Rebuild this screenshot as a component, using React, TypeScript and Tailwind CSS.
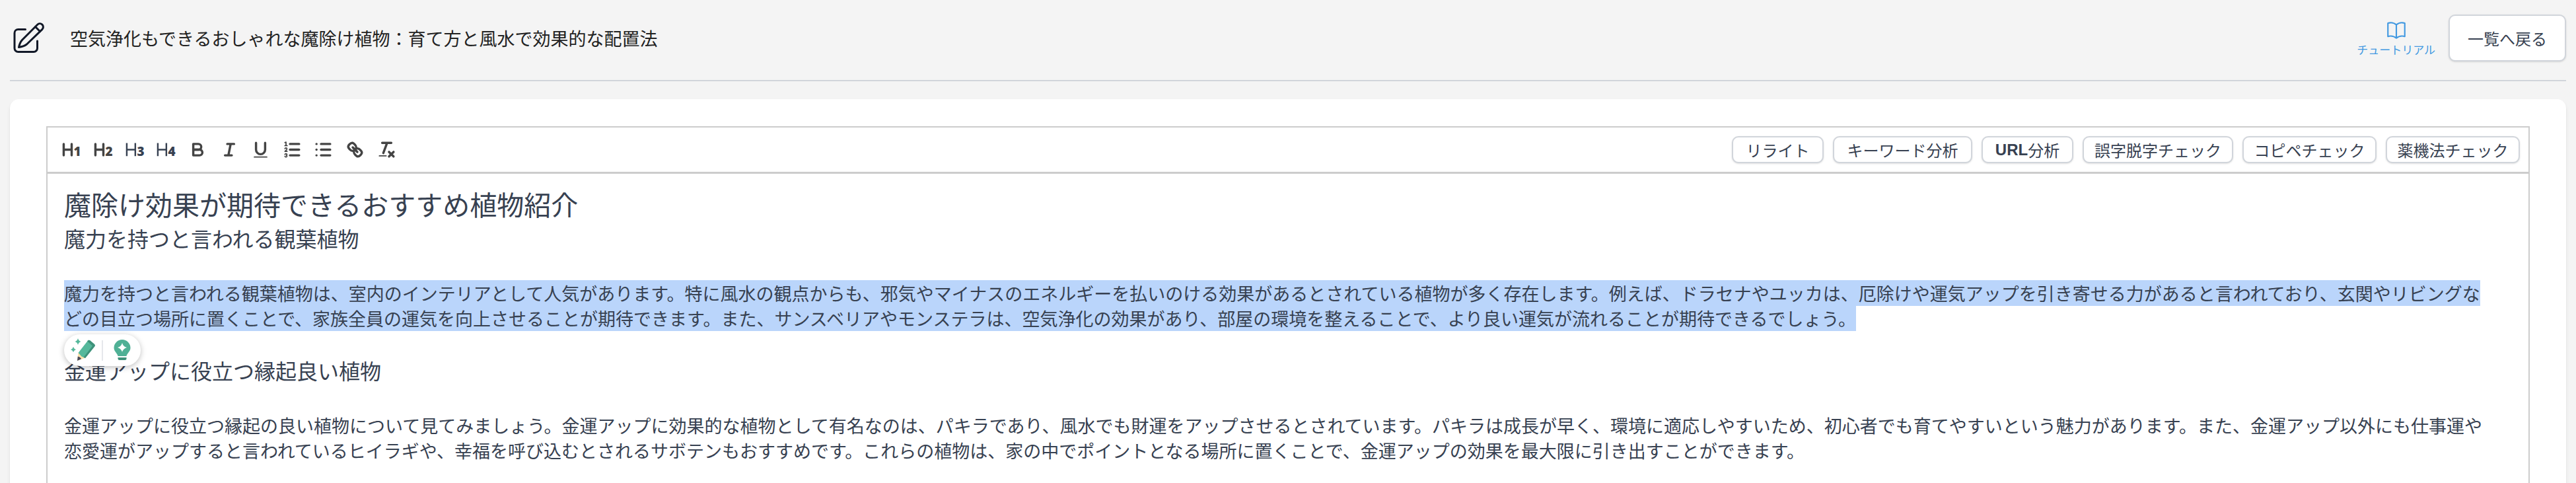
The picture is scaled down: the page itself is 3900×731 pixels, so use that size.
import React from 'react';
import { clsx } from 'clsx';

// 見出しアイコン (H + 数字)
function HeadingIcon({ level, thin = false }: { level: number; thin?: boolean }) {
  return (
    <svg viewBox="0 0 18 18" className="size-[31px]" aria-hidden="true">
      <path
        d={thin ? 'M1.7 3.2V14.6M9.2 3.2V14.6M1.7 9H9.2' : 'M2 4V14M9 4V14M2 9H9'}
        fill="none"
        stroke="currentColor"
        strokeWidth={thin ? 1.4 : 2}
        strokeLinecap={thin ? 'butt' : 'round'}
      />
      <text
        x="14"
        y="14.7"
        textAnchor="middle"
        fontSize="11"
        fontWeight="800"
        fontFamily="Open Sans, sans-serif"
        fill="currentColor"
      >
        {level}
      </text>
    </svg>
  );
}

function ToolIcon({ children }: { children: React.ReactNode }) {
  return (
    <svg
      viewBox="0 0 18 18"
      className="size-[31px]"
      fill="none"
      stroke="currentColor"
      strokeWidth="2"
      strokeLinecap="round"
      strokeLinejoin="round"
      aria-hidden="true"
    >
      {children}
    </svg>
  );
}

const TOOLS = [
  { id: 'h1', label: '見出し1', icon: <HeadingIcon level={1} /> },
  { id: 'h2', label: '見出し2', icon: <HeadingIcon level={2} /> },
  { id: 'h3', label: '見出し3', custom: true, icon: <HeadingIcon level={3} thin /> },
  { id: 'h4', label: '見出し4', custom: true, icon: <HeadingIcon level={4} thin /> },
  {
    id: 'bold',
    label: '太字',
    icon: (
      <ToolIcon>
        <path d="M5 4H9.5A2.5 2.5 0 0 1 9.5 9H5Z" />
        <path d="M5 9H10.5A2.5 2.5 0 0 1 10.5 14H5Z" />
      </ToolIcon>
    ),
  },
  {
    id: 'italic',
    label: '斜体',
    icon: (
      <ToolIcon>
        <path d="M7 4H13M5 14H11M8 14L10 4" />
      </ToolIcon>
    ),
  },
  {
    id: 'underline',
    label: '下線',
    icon: (
      <ToolIcon>
        <path d="M5 3V9a4 4 0 0 0 8 0V3" />
        <rect x="3" y="15" width="12" height="1" rx="0.5" fill="currentColor" stroke="none" />
      </ToolIcon>
    ),
  },
  {
    id: 'ordered',
    label: '番号付きリスト',
    icon: (
      <ToolIcon>
        <path d="M7 4H15M7 9H15M7 14H15" />
        <g strokeWidth="1">
          <path d="M2.5 5.5H4.5M2.5 2.8L3.5 2.4V5.5" />
          <path d="M4.5 10.5h-2c0-.234 1.85-1.076 1.85-2.234A.959.959 0 0 0 2.5 8.156" />
          <path d="M2.5 14.846a.959.959 0 0 0 1.85-.109A.7.7 0 0 0 3.75 14a.688.688 0 0 0 .6-.736.959.959 0 0 0-1.85-.109" />
        </g>
      </ToolIcon>
    ),
  },
  {
    id: 'bullet',
    label: '箇条書き',
    icon: (
      <ToolIcon>
        <path d="M7 4H15M7 9H15M7 14H15" />
        <g fill="currentColor" stroke="none">
          <circle cx="3" cy="4" r="1" />
          <circle cx="3" cy="9" r="1" />
          <circle cx="3" cy="14" r="1" />
        </g>
      </ToolIcon>
    ),
  },
  {
    id: 'link',
    label: 'リンク',
    icon: (
      <ToolIcon>
        <path d="M7 7L11 11" />
        <path d="M8.9 4.577a3.476 3.476 0 0 1 .36 4.679A3.476 3.476 0 0 1 4.577 8.9C3.185 7.5 2.035 6.4 4.217 4.217S7.5 3.185 8.9 4.577Z" />
        <path d="M13.423 9.1a3.476 3.476 0 0 0-4.679-.36 3.476 3.476 0 0 0 .36 4.679c1.392 1.392 2.5 2.542 4.679.36S14.815 10.5 13.423 9.1Z" />
      </ToolIcon>
    ),
  },
  {
    id: 'clean',
    label: '書式をクリア',
    icon: (
      <ToolIcon>
        <path d="M5 3H13M6 12L9.35 3M11 11L15 15M15 11L11 15" />
        <rect x="2" y="14" width="7" height="1" rx="0.5" fill="currentColor" stroke="none" />
      </ToolIcon>
    ),
  },
];

const ACTIONS = [
  { id: 'rewrite', label: 'リライト', width: 'w-[139px]' },
  { id: 'keyword', label: 'キーワード分析', width: 'w-[211px]' },
  { id: 'url', latin: 'URL', label: '分析', width: 'w-[139px]' },
  { id: 'typo', label: '誤字脱字チェック', width: 'w-[228px]' },
  { id: 'copy', label: 'コピペチェック', width: 'w-[203px]' },
  { id: 'law', label: '薬機法チェック', width: 'w-[203px]' },
];

function Header() {
  return (
    <header className="flex h-[123px] items-start justify-between border-b-2 border-[#d1d5db] pt-[22px]">
      <div className="flex h-[71px] items-center gap-[37px] pl-1">
        <svg
          viewBox="0 0 50 50"
          className="size-[50px] text-[#111827]"
          fill="none"
          stroke="currentColor"
          strokeWidth="3"
          strokeLinecap="round"
          strokeLinejoin="round"
          aria-hidden="true"
        >
          <path d="M19.500 11.500H8.500A5.500 5.500 0 0 0 3 17V40A5.500 5.500 0 0 0 8.500 45.500H32A5.500 5.500 0 0 0 37.500 40V29" />
          <path d="M9.500 38.500Q11 31.500 14.500 27.500L37.700 4.300A4.800 4.800 0 0 1 45 11.300L21.500 34Q17 37.500 9.500 38.500Z" />
          <path d="M34.500 7.500L41.500 14.500" />
        </svg>
        <h1 className="text-[27px] leading-[38px] text-[#222222]">
          空気浄化もできるおしゃれな魔除け植物：育て方と風水で効果的な配置法
        </h1>
      </div>

      <div className="flex h-[71px] items-center gap-5">
        <a href="#tutorial" className="flex flex-col items-center text-[17px] leading-6 text-[#4299e1]">
          <svg
            viewBox="0 0 24 24"
            className="size-[34px]"
            fill="none"
            stroke="currentColor"
            strokeWidth="1.5"
            strokeLinecap="round"
            strokeLinejoin="round"
            aria-hidden="true"
          >
            <path d="M12 6.042A8.967 8.967 0 0 0 6 3.75c-1.052 0-2.062.18-3 .512v14.25A8.987 8.987 0 0 1 6 18c2.305 0 4.408.867 6 2.292m0-14.25a8.966 8.966 0 0 1 6-2.292c1.052 0 2.062.18 3 .512v14.25A8.987 8.987 0 0 0 18 18a8.967 8.967 0 0 0-6 2.292m0-14.25v14.25" />
          </svg>
          チュートリアル
        </a>
        <button
          type="button"
          className="h-[71px] rounded-[10px] border-2 border-[#d1d5db] bg-white px-[27px] text-2xl text-[#374151] shadow-sm"
        >
          一覧へ戻る
        </button>
      </div>
    </header>
  );
}

function Toolbar() {
  return (
    <div className="flex items-center justify-between border-b-[3px] border-[#cccccc] p-[13px]">
      <div className="flex w-[524px]">
        {TOOLS.map((tool) => (
          <button
            key={tool.id}
            type="button"
            aria-label={tool.label}
            className={clsx(
              'flex h-[41px] flex-1 items-center justify-center',
              tool.custom ? 'text-[#374151]' : 'text-[#444444]'
            )}
          >
            {tool.icon}
          </button>
        ))}
      </div>

      <div className="flex gap-3.5">
        {ACTIONS.map((action) => (
          <button
            key={action.id}
            type="button"
            className={clsx(
              'flex h-[41px] items-center justify-center rounded-[10px] border-2 border-[#d1d5db] bg-white text-2xl whitespace-nowrap text-[#374151] shadow-sm',
              action.width
            )}
          >
            {action.latin && (
              <span className="font-['Liberation_Sans',sans-serif] font-bold">{action.latin}</span>
            )}
            {action.label}
          </button>
        ))}
      </div>
    </div>
  );
}

// 選択範囲の下に出るAIメニュー
function SelectionMenu() {
  return (
    <div className="absolute top-full left-0 mt-[5px] flex h-12 w-[116px] items-center justify-center rounded-full bg-white shadow-[0_2px_8px_rgba(0,0,0,0.25)]">
      <button type="button" aria-label="AIで書き直す" className="flex flex-1 justify-center">
        <svg viewBox="0 0 38 36" className="h-9 w-[38px]" aria-hidden="true">
          <path d="M11 0Q12 4 15.500 5Q12 6 11 10Q10 6 6.500 5Q10 4 11 0Z" fill="#55b89b" />
          <path d="M4 13Q5 16 8 17Q5 18 4 21Q3 18 0 17Q3 16 4 13Z" fill="#55b89b" />
          <path d="M10 34L11.500 22L21 30Z" fill="#fbdfa8" />
          <path d="M10 34L10.800 27.500Q14.500 28 16 31.300Z" fill="#4a4a5a" />
          <path d="M11.500 22L26 3.500Q27.500 2 29.500 3.500L36 9Q37.500 10.500 36.500 12L22 30L16.500 27.500Z" fill="#55b89b" />
          <path d="M26 3.500Q27.500 2 29.500 3.500L36 9Q37.500 10.500 36.500 12L22 30L19.500 28.800L33 11.500L25.200 4.500Z" fill="#3f917a" />
        </svg>
      </button>
      <span className="h-[31px] w-0.5 bg-gray-200" />
      <button type="button" aria-label="AIのアイデア" className="flex flex-1 justify-center">
        <svg viewBox="0 0 26 36" className="h-9 w-[26px]" aria-hidden="true">
          <path d="M13 2A12.500 12.500 0 0 1 25.500 14.500C25.500 20 20 23 19.500 27H6.500C6 23 .5 20 .5 14.500A12.500 12.500 0 0 1 13 2Z" fill="#4fb095" />
          <path d="M13 7Q14.500 12.500 20 14Q14.500 15.500 13 21Q11.500 15.500 6 14Q11.500 12.500 13 7Z" fill="#ffffff" />
          <path d="M6.500 29H19.500V30.500Q19.500 33 17 33H9Q6.500 33 6.500 30.500Z" fill="#3f917a" />
        </svg>
      </button>
    </div>
  );
}

function Article() {
  return (
    <article className="min-h-[560px] pt-4 pr-12 pb-5 pl-[25px] text-[27px] leading-[38px] text-[#374151]">
      <h2 className="text-[41px] leading-[58px]">魔除け効果が期待できるおすすめ植物紹介</h2>
      <h3 className="mb-[42px] text-[32px] leading-[46px]">魔力を持つと言われる観葉植物</h3>
      <div className="relative">
        <p>
          <mark className="bg-[#bad5fb] text-[#374151]">
            魔力を持つと言われる観葉植物は、室内のインテリアとして人気があります。特に風水の観点からも、邪気やマイナスのエネルギーを払いのける効果があるとされている植物が多く存在します。例えば、ドラセナやユッカは、厄除けや運気アップを引き寄せる力があると言われており、玄関やリビングなどの目立つ場所に置くことで、家族全員の運気を向上させることが期待できます。また、サンスベリアやモンステラは、空気浄化の効果があり、部屋の環境を整えることで、より良い運気が流れることが期待できるでしょう。
          </mark>
        </p>
        <SelectionMenu />
      </div>
      <h3 className="mt-9 mb-[42px] text-[32px] leading-[46px]">金運アップに役立つ縁起良い植物</h3>
      <p>
        金運アップに役立つ縁起の良い植物について見てみましょう。金運アップに効果的な植物として有名なのは、パキラであり、風水でも財運をアップさせるとされています。パキラは成長が早く、環境に適応しやすいため、初心者でも育てやすいという魅力があります。また、金運アップ以外にも仕事運や恋愛運がアップすると言われているヒイラギや、幸福を呼び込むとされるサボテンもおすすめです。これらの植物は、家の中でポイントとなる場所に置くことで、金運アップの効果を最大限に引き出すことができます。
      </p>
    </article>
  );
}

export default function App() {
  return (
    <div
      lang="ja"
      className="h-screen overflow-hidden bg-[#f4f4f4] px-[15px] font-['Noto_Sans_CJK_JP',sans-serif]"
    >
      <Header />
      <main className="mt-[27px] rounded-[14px] bg-white px-[55px] pt-[41px] pb-10 shadow-md">
        <div className="border-2 border-[#cccccc]">
          <Toolbar />
          <Article />
        </div>
      </main>
    </div>
  );
}
